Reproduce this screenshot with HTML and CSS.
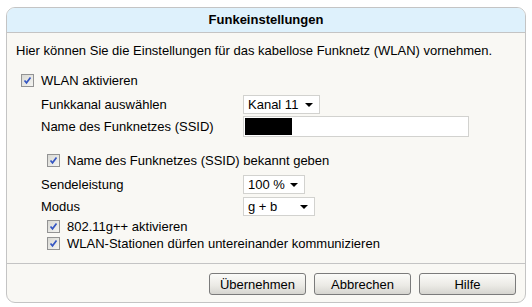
FILE: index.html
```html
<!DOCTYPE HTML><html>
<head>
  <meta name="viewport" content="width=device-width, initial-scale=1">
  <title>Funkeinstellungen</title>
  <link rel="stylesheet" href="styles.css">
</head>
<body>
  <div class="panel">
    <div class="panel_head">Funkeinstellungen</div>
    <div class="panel_body">
      <div class="intro">Hier können Sie die Einstellungen für das kabellose Funknetz (WLAN) vornehmen.</div>
      <label class="check_row wlan_row">
        <span class="check"><svg width="11" height="11" viewBox="0 0 11 11"><path d="M2.5 5.5 L4.5 7.8 L8.5 2.5" fill="none" stroke="#3556c2" stroke-width="1.7"/></svg></span>
        WLAN aktivieren
      </label>
      <div class="field_row channel_row">
        <span class="field_label">Funkkanal auswählen</span>
        <span class="select select_channel">Kanal 11<i class="arrow"></i></span>
      </div>
      <div class="field_row ssid_row">
        <span class="field_label">Name des Funknetzes (SSID)</span>
        <span class="text_input"><span class="ssid_value"></span></span>
      </div>
      <label class="check_row sub_check visible_row">
        <span class="check"><svg width="11" height="11" viewBox="0 0 11 11"><path d="M2.5 5.5 L4.5 7.8 L8.5 2.5" fill="none" stroke="#3556c2" stroke-width="1.7"/></svg></span>
        Name des Funknetzes (SSID) bekannt geben
      </label>
      <div class="field_row power_row">
        <span class="field_label">Sendeleistung</span>
        <span class="select select_power">100 %<i class="arrow"></i></span>
      </div>
      <div class="field_row mode_row">
        <span class="field_label">Modus</span>
        <span class="select select_mode">g + b<i class="arrow"></i></span>
      </div>
      <label class="check_row sub_check gpp_row">
        <span class="check"><svg width="11" height="11" viewBox="0 0 11 11"><path d="M2.5 5.5 L4.5 7.8 L8.5 2.5" fill="none" stroke="#3556c2" stroke-width="1.7"/></svg></span>
        802.11g++ aktivieren
      </label>
      <label class="check_row sub_check stations_row">
        <span class="check"><svg width="11" height="11" viewBox="0 0 11 11"><path d="M2.5 5.5 L4.5 7.8 L8.5 2.5" fill="none" stroke="#3556c2" stroke-width="1.7"/></svg></span>
        WLAN-Stationen dürfen untereinander kommunizieren
      </label>
    </div>
    <div class="panel_foot">
      <button class="button">Übernehmen</button>
      <button class="button">Abbrechen</button>
      <button class="button">Hilfe</button>
    </div>
  </div>
</body>
</html>
```

FILE: styles.css
```css
html {font-family: "Liberation Sans", Arial, sans-serif; font-size: 13px; color: #000;}
body {margin: 0; padding: 7px 0 0 6px; background: #fff;}

.panel {width: 518px; height: 294px; border: 1px solid #c4c4c4; border-radius: 9px; background: #f9f8f4;
  display: flex; flex-direction: column; overflow: hidden;}
.panel_head {height: 24px; line-height: 24px; background: #def1fc; border-bottom: 1px solid #c4c4c4;
  text-align: center; font-weight: bold;}
.panel_body {padding: 9px 0 11px 0; display: flex; flex-direction: column; border-bottom: 1px solid #c4c4c4;}

.intro {height: 18px; line-height: 18px; padding-left: 9px;}

.check_row {display: flex; align-items: center; height: 18px;}
.check {width: 13px; height: 13px; margin-right: 7px; box-sizing: border-box; border: 1px solid #939393;
  background: linear-gradient(135deg, #d9d9d4, #f4f4f1); display: inline-flex;}
.wlan_row {margin-top: 11px; padding-left: 14px;}
.sub_check {padding-left: 40px; margin-top: 2px;}
.visible_row {margin-top: 14px;}
.stations_row {margin-top: 0;}
.gpp_row, .stations_row {height: 17px;}

.field_row {display: flex; align-items: center; padding-left: 34px;}
.field_label {width: 202px;}
.channel_row {height: 20px; margin-top: 5px;}
.ssid_row {height: 21px; margin-top: 2px;}
.power_row {height: 20px; margin-top: 5px;}
.mode_row {height: 20px; margin-top: 2px;}

.select {position: relative; box-sizing: border-box; height: 19px; line-height: 17px; padding-left: 4px;
  background: #fff; border: 1px solid #d2d2cf;}
.select_channel {width: 77px;}
.select_power {width: 62px;}
.select_mode {width: 72px;}
.arrow {position: absolute; right: 6px; top: 7px; width: 0; height: 0;
  border-left: 4px solid transparent; border-right: 4px solid transparent; border-top: 4px solid #000;}

.text_input {box-sizing: border-box; width: 226px; height: 21px; padding: 1px; background: #fff;
  border: 1px solid #d2d2cf; display: flex;}
.ssid_value {width: 47px; height: 17px; background: #000;}

.panel_foot {flex: 1; display: flex; justify-content: flex-end; align-items: flex-start; gap: 8px;
  padding: 9px 9px 0 0;}
.button {width: 97px; height: 22px; font-family: inherit; font-size: 13px; color: #000; padding: 0;
  border: 1px solid #7b7b7b; border-radius: 3px; background: linear-gradient(#fbfbf9, #ecebe6 55%, #d6d5d0);}
```
